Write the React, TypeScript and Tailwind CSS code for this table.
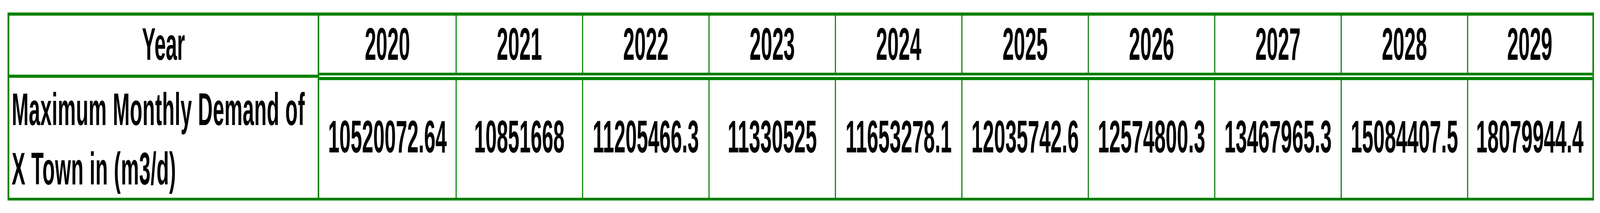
import React, { useLayoutEffect, useState } from "react";

const years = ["2020", "2021", "2022", "2023", "2024", "2025", "2026", "2027", "2028", "2029"];
const values = [
  "10520072.64",
  "10851668",
  "11205466.3",
  "11330525",
  "11653278.1",
  "12035742.6",
  "12574800.3",
  "13467965.3",
  "15084407.5",
  "18079944.4",
];

const DESIGN_W = 7403;

function cellWidth(i: number) {
  if (i === 0) return "w-[631px]";
  if (i === 9) return "w-[575px] border-l-[5px] border-[#008000]";
  return "w-[585px] border-l-[5px] border-[#008000]";
}

function Txt({ children }: { children: React.ReactNode }) {
  return <span className="inline-block scale-y-[1.25] whitespace-nowrap">{children}</span>;
}

export default function App() {
  const [k, setK] = useState(1);

  useLayoutEffect(() => {
    const fit = () => {
      const w = Math.min(
        window.innerWidth || DESIGN_W,
        document.documentElement.clientWidth || DESIGN_W
      );
      setK(Math.min(1, w / DESIGN_W));
    };
    fit();
    window.addEventListener("resize", fit);
    return () => window.removeEventListener("resize", fit);
  }, []);

  return (
    <div className="w-screen h-[545px] overflow-hidden bg-white">
      <div
        className="w-[7403px] h-[545px] origin-top-left bg-white pt-[32px] pl-[35px] font-['Liberation_Sans',Arial,sans-serif] font-bold text-black text-[94px] leading-none"
        style={{ transform: `scaleX(${k})` }}
      >
        <div className="flex w-[7340px] border-t-8 border-l-8 border-r-[7px] border-b-[7px] border-[#008000]">
          {/* Row header column */}
          <div className="w-[1434px] shrink-0 flex flex-col border-r-[7px] border-[#008000]">
            <div className="h-[159px] border-b-8 border-[#008000] flex items-center justify-center pb-[5px]">
              <Txt>Year</Txt>
            </div>
            <div className="h-[307px] pt-[7px] pl-[11px] flex items-center">
              <span className="inline-block scale-y-[1.25] whitespace-nowrap leading-[122.4px] tracking-[1px]">
                Maximum Monthly Demand of
                <br />
                X Town in (m3/d)
              </span>
            </div>
          </div>
          {/* Data columns */}
          <div className="w-[5891px] shrink-0 flex flex-col">
            <div className="h-[153px] flex border-b-[7px] border-[#008000]">
              {years.map((y, i) => (
                <div key={y} className={`${cellWidth(i)} shrink-0 flex items-center justify-center`}>
                  <Txt>{y}</Txt>
                </div>
              ))}
            </div>
            <div className="h-[4px]" />
            <div className="h-[309px] flex border-t-8 border-[#008000]">
              {values.map((v, i) => (
                <div key={v} className={`${cellWidth(i)} shrink-0 flex items-center justify-center pb-[11px]`}>
                  <Txt>{v}</Txt>
                </div>
              ))}
            </div>
          </div>
        </div>
      </div>
    </div>
  );
}
